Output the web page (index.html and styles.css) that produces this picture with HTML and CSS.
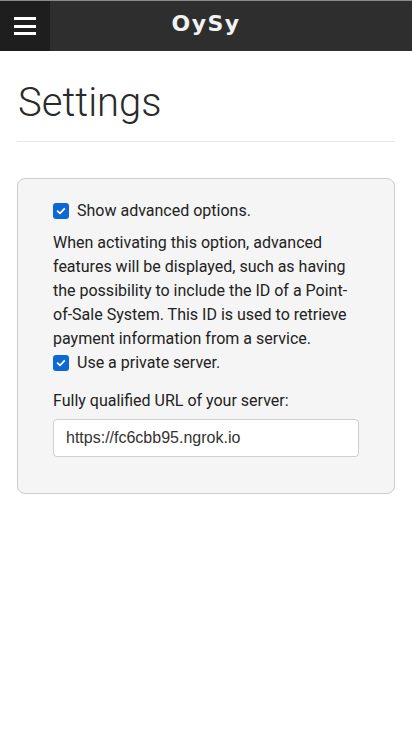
FILE: index.html
```html
<!DOCTYPE html>
<html>
<head>
<meta charset="utf-8">
<link rel="stylesheet" href="styles.css">
</head>
<body>
<header class="topbar">
  <button class="menu-btn" aria-label="Menu">
    <span class="bar"></span><span class="bar"></span><span class="bar"></span>
  </button>
  <div class="brand">OySy</div>
  <div class="spacer"></div>
</header>
<main class="content">
  <h1 class="page-title">Settings</h1>
  <hr class="divider">
  <section class="card">
    <label class="check-row">
      <span class="checkbox"><svg viewBox="0 0 16 16" width="16" height="16"><path d="M4.6 8.2 L7 10.4 L11.3 5.8" fill="none" stroke="#fff" stroke-width="1.8" stroke-linecap="round" stroke-linejoin="round"/></svg></span>
      <span>Show advanced options.</span>
    </label>
    <p class="help">When activating this option, advanced features will be displayed, such as having the possibility to include the ID of a Point-of-Sale System. This ID is used to retrieve payment information from a service.</p>
    <label class="check-row">
      <span class="checkbox"><svg viewBox="0 0 16 16" width="16" height="16"><path d="M4.6 8.2 L7 10.4 L11.3 5.8" fill="none" stroke="#fff" stroke-width="1.8" stroke-linecap="round" stroke-linejoin="round"/></svg></span>
      <span>Use a private server.</span>
    </label>
    <div class="field-label">Fully qualified URL of your server:</div>
    <div class="input">https://fc6cbb95.ngrok.io</div>
  </section>
</main>
</body>
</html>
```
FILE: styles.css
```css
* { box-sizing: border-box; }
html, body { margin: 0; padding: 0; background: #fff; }
body { font-family: Roboto, "Noto Sans", sans-serif; color: #222; }

.topbar {
  display: flex;
  align-items: stretch;
  height: 51px;
  background: #2e2e2e;
  border-top: 1px solid #8a8a8a;
}
.menu-btn {
  width: 50px;
  background: #1e1e1e;
  border: 0;
  padding: 0 0 0 14px;
  margin: 0;
  display: flex;
  flex-direction: column;
  justify-content: center;
  gap: 4.5px;
}
.bar { display: block; width: 22px; height: 3px; background: #fff; }
.brand {
  flex: 1;
  text-align: center;
  color: #f2f2f2;
  font-family: "DejaVu Sans", sans-serif;
  font-weight: bold;
  font-size: 22px;
  letter-spacing: 1.4px;
  line-height: 46px;
}
.spacer { width: 50px; }

.content { padding: 0 17px; }
.page-title {
  margin: 0;
  padding-top: 29px;
  font-weight: 300;
  font-size: 40px;
  line-height: 46px;
  color: #2a2a2a;
  padding-left: 1px;
}
.divider {
  margin: 15px 0 0;
  border: 0;
  border-top: 1px solid #e6e6e6;
}
.card {
  margin-top: 36px;
  background: #f5f5f5;
  border: 1px solid #cccccc;
  border-radius: 8px;
  padding: 20px 35px 36px 35px;
  font-size: 16px;
  line-height: 24px;
}
.check-row { display: flex; align-items: center; gap: 8px; }
.checkbox {
  width: 16px; height: 16px;
  background: #0b68d4;
  border-radius: 3px;
  display: flex;
}
.help { margin: 8px 0 0; }
.field-label { margin-top: 14px; }
.input {
  margin-top: 6px;
  height: 38px;
  background: #fff;
  border: 1px solid #cfcfcf;
  border-radius: 4px;
  padding: 0 12px;
  font-family: "Liberation Sans", Arial, sans-serif;
  font-size: 16px;
  line-height: 36px;
  color: #333;
}
```
